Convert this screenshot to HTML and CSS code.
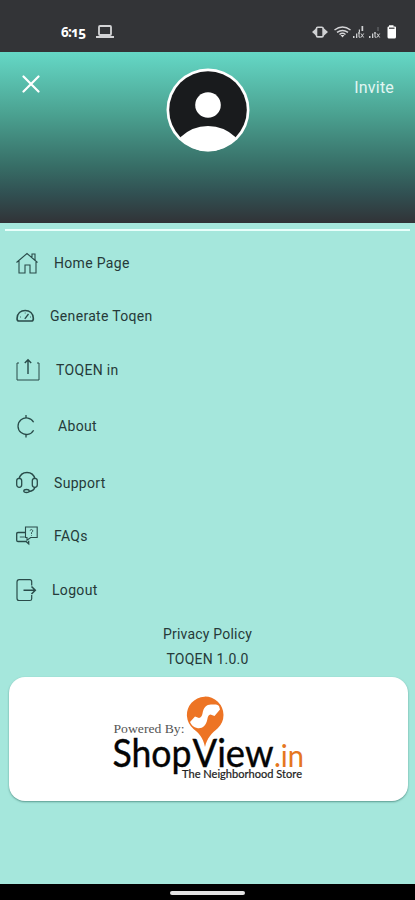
FILE: index.html
```html
<!DOCTYPE html>
<html lang="en">
<head>
<meta charset="utf-8">
<meta name="viewport" content="width=device-width, initial-scale=1">
<title>TOQEN</title>
<link rel="stylesheet" href="styles.css">
</head>
<body>
<div class="screen">
  <div class="status">
    <span class="time">6:15</span>
    <svg class="laptop" width="18" height="14" viewBox="0 0 18 14"><rect x="3" y="1" width="12" height="9" rx="1" fill="none" stroke="#d4d4d6" stroke-width="1.8"/><path d="M0 11h18v1.500q0 .5-.5.5H.5Q0 13 0 12.500z" fill="#d4d4d6"/></svg>
    <svg class="signals" width="90" height="18" viewBox="0 0 90 18">
      <g fill="#d0d1d3"><path d="M0 9l5-4.500v9zM16 9l-5-4.500v9z"/><rect x="4.500" y="4.300" width="6.600" height="9.600" rx="1.200" fill="#333437" stroke="#d0d1d3" stroke-width="1.600"/></g>
      <g fill="none" stroke="#d5d5d7" stroke-width="1.500"><path d="M22.500 7Q30.500 .8 38.500 7"/><path d="M25 9.400Q30.500 5.400 36 9.400"/><path d="M27.500 11.500Q30.500 9.200 33.500 11.500"/></g><path d="M28.500 12h4l-2 2.500z" fill="#ddd"/>
      <g fill="#d0d1d3"><path d="M41 13h1.500v2H41zM44 10.500h1.300V15H44zM49.500 3h1.700v5h-1.700zM46.800 6.500h1.200V9h-1.200zM57 13h1.500v2H57zM60 10.500h1.300V15H60z"/><path d="M65.500 4h1v4h-1z" opacity=".4"/></g>
      <path d="M46 10h2M47 9v5.200h1.500M49 10.500l2.700 4M51.700 10.500l-2.700 4M62 10h2M63 9v5.200h1.500M65 10.500l2.700 4M67.700 10.500l-2.700 4" fill="none" stroke="#cfd0d2" stroke-width="1"/>
      <path d="M77 2.200h4.500v1.300H83q1 0 1 1V14q0 1.500-1.500 1.500H77q-1.500 0-1.500-1.500V4.500q0-1 1-1H77z" fill="#fff"/><path d="M77 5.200h5.500" stroke="#333437" stroke-width="1.200"/>
    </svg>
  </div>
  <header class="header">
    <svg class="close" width="18" height="18" viewBox="0 0 18 18"><path d="M1.500 1.500l15 15M16.500 1.500l-15 15" stroke="#fff" stroke-width="2.200" stroke-linecap="round"/></svg>
    <svg class="avatar" width="84" height="84" viewBox="0 0 84 84"><circle cx="42" cy="42" r="41.500" fill="#fff"/><circle cx="42" cy="42" r="38.800" fill="#191b1d"/><circle cx="42" cy="37" r="12.800" fill="#fff"/><path d="M14 69.500Q26 58 42 58t28 11.500Q59 83.300 42 83.300T14 69.500z" fill="#fff"/></svg>
    <span class="invite">Invite</span>
  </header>
  <main class="drawer">
    <hr class="divider">
    <nav class="menu">
      <a class="item home"><svg class="icon" viewBox="0 0 24 24"><path d="M1.500 11.500L12 2.500l10.500 9M4 10v12h6v-8h5v8h6V10M17 6V3h3v6" stroke-width="1.100"/></svg><span>Home Page</span></a>
      <a class="item generate"><svg class="icon" viewBox="0 0 24 24"><path d="M3.500 17Q1.800 16.600 2.100 14C2.400 9.500 5.600 6.500 10.200 6.500s7.800 3 8.100 7.500q.3 2.600-1.400 3z" stroke-width="1.600"/><path d="M9.800 14.800L13.500 10" stroke-width="1.300"/><path d="M5 13h1M10.200 8.500v1M15 13h1" stroke-width=".8"/></svg><span>Generate Toqen</span></a>
      <a class="item toqen"><svg class="icon" viewBox="0 0 24 24"><path d="M4 5H2v17h22V5h-2" stroke-width="1"/><path d="M13 16V2M9.800 5L13 1.800 16.200 5" stroke-width="1.400"/></svg><span>TOQEN in</span></a>
      <a class="item about"><svg class="icon" viewBox="0 0 24 24"><path d="M18.600 8.200A8.300 8.300 0 1 0 18.600 16.200" stroke-width="1.300"/><path d="M11 1v3M11 20.500v3" stroke-width="1.300"/></svg><span>About</span></a>
      <a class="item support"><svg class="icon" viewBox="0 0 24 24"><path d="M4 8C5 4 8 1.500 12 1.500S19 4 20 8" stroke-width="1.500"/><rect x="1.700" y="7.300" width="5" height="9" rx="2.500" stroke-width="1.300"/><rect x="17.300" y="7.300" width="5" height="9" rx="2.500" stroke-width="1.300"/><path d="M20 16q-1 4-6 4.500" stroke-width="1.300"/><ellipse cx="11.500" cy="20" rx="2.700" ry="1.500" stroke-width="1.300"/></svg><span>Support</span></a>
      <a class="item faqs"><svg class="icon" viewBox="0 0 24 24"><path d="M10 8.500H3q-1.300 0-1.300 1.300v6.500q0 1.200 1.300 1.200h8l2.700 2.300v-3" stroke-width="1.300"/><path d="M10.500 3h11.700v10.500h-6.500L12 16.200v-2.700h-1.500z" stroke-width="1.100"/><path d="M14.800 6.500q1.700-2 3 0 .3 1-1.300 2v1.500M16.500 11.300v.7M4.800 13h5" stroke-width=".9"/></svg><span>FAQs</span></a>
      <a class="item logout"><svg class="icon" viewBox="0 0 24 24"><path d="M16.700 7.500V3.500q0-1.800-1.800-1.800H4.200Q2 1.700 2 4v16.200q0 2.300 2.200 2.300h10.700q1.800 0 1.800-1.800V17" stroke-width="1.200"/><path d="M8.500 12.200H20M16.500 8.500l3.800 3.700-3.800 3.800" stroke-width="1.500"/></svg><span>Logout</span></a>
    </nav>
    <footer class="footer">
      <a class="privacy">Privacy Policy</a>
      <span class="version">TOQEN 1.0.0</span>
    </footer>
    <section class="card">
      <svg class="brand" width="200" height="90" viewBox="0 0 200 90">
        <text class="powered" x="3.500" y="38" textLength="71" lengthAdjust="spacingAndGlyphs">Powered By:</text>
        <text class="wordmark" y="72"><tspan x="2.500" textLength="79" lengthAdjust="spacingAndGlyphs">Shop</tspan><tspan x="82.500" textLength="81" lengthAdjust="spacingAndGlyphs">View</tspan></text>
        <text class="domain" x="164" y="72" textLength="30" lengthAdjust="spacingAndGlyphs">.in</text>
        <path d="M95 52C93 42 88.500 38 83.500 34A18.300 18.300 0 1 1 108 33C102 38 97 43 95 52z" fill="#ed7424"/>
        <path d="M80 27l5-5.500 4 1.500c2-.5 3-2 3.500-4.500C93.500 12 97 9 102 9.500c3 .2 5-.5 7 1.500l1 3.500-5.500 6.500-4-1.500c-2 .5-2.700 2-3.200 5C96 31 92 34 87 33q-5-1-7-6z" fill="#fff"/>
        <text class="tagline" x="72" y="83" textLength="120" lengthAdjust="spacingAndGlyphs">The Neighborhood Store</text>
      </svg>
    </section>
  </main>
  <div class="navbar"><span class="handle"></span></div>
</div>
</body>
</html>
```
FILE: styles.css
```css
* { box-sizing: border-box; }
body { margin: 0; font-family: Roboto, "Liberation Sans", sans-serif; color: #263a39; }
.screen { width: 415px; height: 900px; display: flex; flex-direction: column; overflow: hidden; background: #a5e7dc; }

.status { height: 52px; flex: none; display: flex; align-items: center; padding: 12px 13px 0 61px; background: #333437; }
.time { width: 35px; color: #fff; font: bold 13.500px/18px "Noto Sans", sans-serif; font-variant-numeric: oldstyle-nums; letter-spacing: -.8px; }
.signals { margin-left: auto; }

.header { height: 171px; flex: none; display: grid; grid-template-columns: 1fr 84px 1fr; align-items: start; padding: 0 21px 0 22px; background: linear-gradient(#65d8c6 0%, #4ba291 36%, #376d66 67%, #315052 83%, #313337 100%); }
.close { margin-top: 23px; }
.avatar { margin-top: 16px; }
.invite { margin-top: 26px; justify-self: end; font-size: 16px; line-height: 20px; letter-spacing: .2px; color: #e2f6f3; }

.drawer { flex: 1; }
.divider { height: 2px; margin: 6px 5px; border: 0; background: #e8fffb; }
.menu { display: flex; flex-direction: column; }
.item { height: 54px; display: flex; align-items: center; padding-left: 15px; font-size: 14px; line-height: 18px; letter-spacing: .32px; }
.item span { margin-left: 15px; }
.icon { width: 24px; height: 24px; flex: none; overflow: visible; fill: none; stroke: #294b49; }
.home { height: 52px; }
.generate span { margin-left: 11px; }
.toqen span { margin-left: 17px; }
.about { height: 58px; }
.about span { margin-left: 19px; }
.support { height: 56px; }
.faqs { height: 50px; }
.logout { height: 58px; }
.logout span { margin-left: 13px; }

.footer { display: flex; flex-direction: column; align-items: center; font-size: 14px; letter-spacing: .2px; }
.privacy { line-height: 30px; }
.version { line-height: 20px; }
.card { height: 124px; margin: 8px 7px 0 9px; padding: 18px 0 0 101px; border-radius: 16px; background: #fff; box-shadow: 0 1px 2px rgba(30, 90, 80, .55); }
.brand { display: block; }
.powered { font: 12px "Liberation Serif", serif; fill: #555; }
.wordmark { font: 39px Lato, sans-serif; fill: #050505; stroke: #050505; stroke-width: .4px; }
.domain { font: 30px Lato, sans-serif; fill: #e57620; }
.tagline { font: 10.500px Lato, sans-serif; fill: #222; stroke: #222; stroke-width: .2px; }

.navbar { height: 16px; flex: none; display: flex; justify-content: center; padding-top: 7px; background: #000; }
.handle { width: 75px; height: 4px; border-radius: 2px; background: #e3e3e3; }
```
